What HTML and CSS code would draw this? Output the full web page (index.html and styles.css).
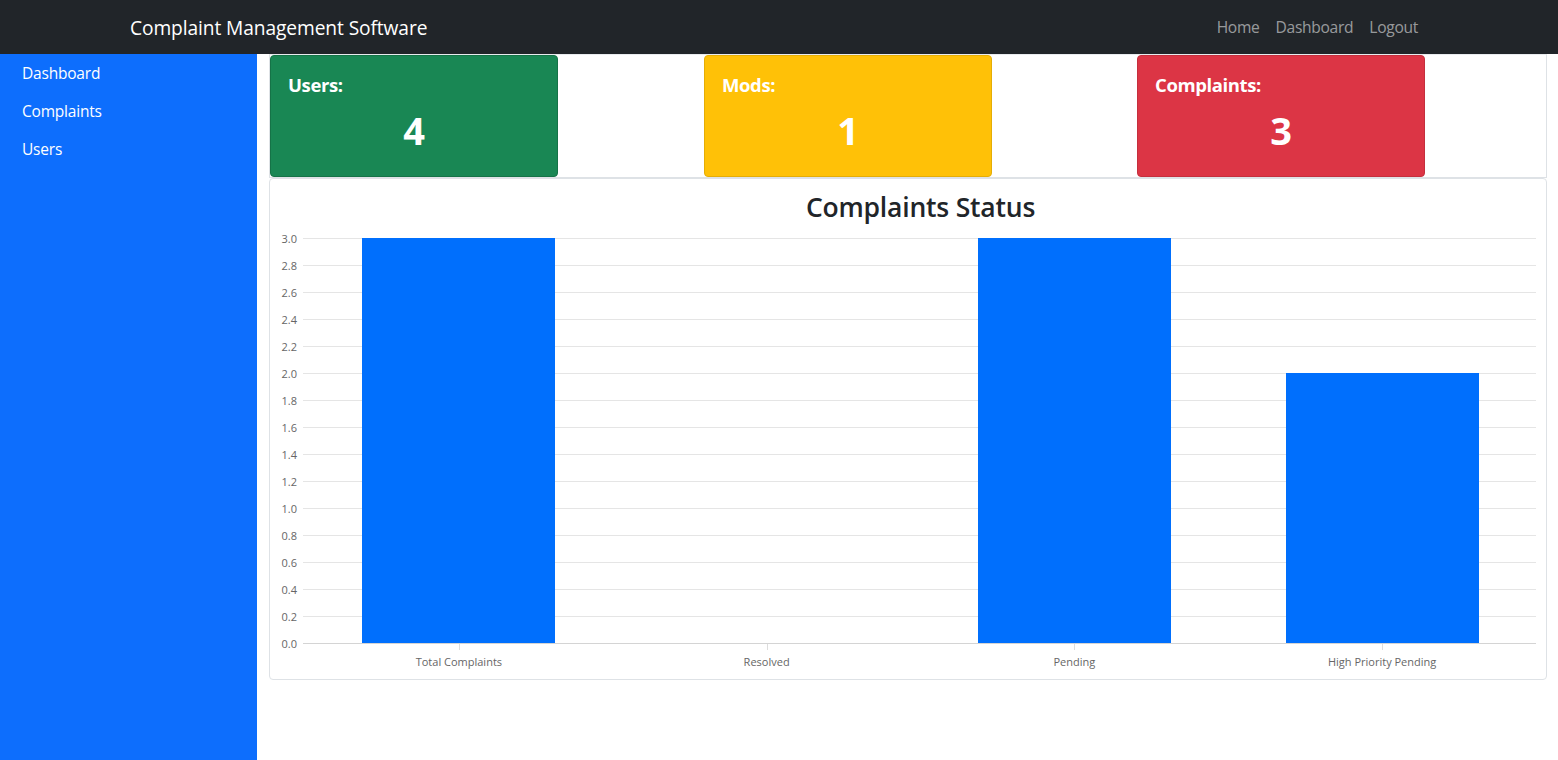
FILE: index.html
```html
<!DOCTYPE html>
<html lang="en">
<head>
<meta charset="utf-8">
<title>Complaint Management Software</title>
<link rel="stylesheet" href="styles.css">
</head>
<body>
<header class="topbar">
  <a class="brand" href="#">Complaint Management Software</a>
  <nav class="topnav">
    <a href="#">Home</a>
    <a href="#">Dashboard</a>
    <a href="#">Logout</a>
  </nav>
</header>
<div class="layout">
  <aside class="sidebar">
    <a href="#">Dashboard</a>
    <a href="#">Complaints</a>
    <a href="#">Users</a>
  </aside>
  <main class="main">
    <section class="stats">
      <div class="stat-col"><div class="stat green"><div class="stat-label">Users:</div><div class="stat-value">4</div></div></div>
      <div class="stat-col"><div class="stat yellow"><div class="stat-label">Mods:</div><div class="stat-value">1</div></div></div>
      <div class="stat-col"><div class="stat red"><div class="stat-label">Complaints:</div><div class="stat-value">3</div></div></div>
    </section>
    <section class="chart-card">
      <h2 class="chart-title">Complaints Status</h2>
      <div class="chart">
        <div class="y-axis">
          <div class="tick">3.0</div><div class="tick">2.8</div><div class="tick">2.6</div><div class="tick">2.4</div>
          <div class="tick">2.2</div><div class="tick">2.0</div><div class="tick">1.8</div><div class="tick">1.6</div>
          <div class="tick">1.4</div><div class="tick">1.2</div><div class="tick">1.0</div><div class="tick">0.8</div>
          <div class="tick">0.6</div><div class="tick">0.4</div><div class="tick">0.2</div><div class="tick">0.0</div>
        </div>
        <div class="plot-wrap">
          <div class="plot">
            <div class="bar-col"><div class="bar" style="height:100%"></div></div>
            <div class="bar-col"><div class="bar" style="height:0%"></div></div>
            <div class="bar-col"><div class="bar" style="height:100%"></div></div>
            <div class="bar-col"><div class="bar" style="height:66.667%"></div></div>
          </div>
          <div class="x-axis">
            <div class="x-label">Total Complaints</div>
            <div class="x-label">Resolved</div>
            <div class="x-label">Pending</div>
            <div class="x-label">High Priority Pending</div>
          </div>
        </div>
      </div>
    </section>
  </main>
</div>
</body>
</html>
```

FILE: styles.css
```css
* { box-sizing: border-box; }
html, body { margin: 0; height: 100%; }
body {
  font-family: "Open Sans", "Noto Sans", "Liberation Sans", sans-serif;
  color: #212529;
  background: #fff;
  overflow: hidden;
}
a { text-decoration: none; }

.topbar {
  height: 54px;
  background: #212529;
  display: flex;
  align-items: center;
  justify-content: space-between;
  padding: 0 132px 0 130px;
}
.brand {
  color: #fff;
  font-size: 19.2px;
  letter-spacing: -0.1px;
}
.topnav { display: flex; }
.topnav a {
  color: rgba(255,255,255,0.55);
  font-size: 15.6px;
  padding: 0 8px;
  letter-spacing: -0.3px;
}

.layout {
  display: flex;
  height: calc(100% - 54px);
}
.sidebar {
  width: 257px;
  flex: none;
  background: #0d6efd;
  display: flex;
  flex-direction: column;
  padding: 8px 0 0 22px;
  gap: 16px;
}
.sidebar a {
  color: #fff;
  font-size: 15.5px;
  line-height: 22px;
  letter-spacing: -0.2px;
}

.main {
  flex: 1;
  padding: 0 11px 0 12px;
}
.stats {
  height: 124px;
  border: 1px solid #dee2e6;
  border-top-color: #e9ecef;
  display: grid;
  grid-template-columns: 434px 433px 1fr;
}
.stat {
  width: 288px;
  height: 122px;
  border-radius: 4px;
  color: #fff;
  padding: 16px 17px 0;
}
.green { background: #198754; border: 1px solid #157347; }
.yellow { background: #ffc107; border: 1px solid #e5ad06; }
.red { background: #dc3545; border: 1px solid #c52f3d; }
.stat-label {
  font-size: 18.5px;
  font-weight: 700;
  line-height: 26px;
  letter-spacing: -0.4px;
}
.stat-value {
  text-align: center;
  font-size: 38px;
  font-weight: 700;
  line-height: 50px;
  margin-top: 7px;
}

.chart-card {
  height: 502px;
  border: 1px solid #dee2e6;
  border-radius: 4px;
  padding: 0 10px 0 10px;
}
.chart-title {
  margin: 8px 0 0;
  padding-left: 25px;
  text-align: center;
  font-size: 26.5px;
  font-weight: 600;
  line-height: 40px;
  letter-spacing: -0.2px;
}
.chart {
  display: flex;
  margin-top: 11px;
}
.y-axis {
  width: 17px;
  height: 405px;
  display: flex;
  flex-direction: column;
  justify-content: space-between;
  align-items: flex-end;
  margin-right: 6px;
}
.tick {
  height: 0;
  display: flex;
  align-items: center;
  font-size: 11px;
  color: #666;
}
.plot-wrap { flex: 1; }
.plot {
  height: 406px;
  display: grid;
  grid-template-columns: repeat(4, 1fr);
  align-items: end;
  padding-left: 2px;
  background:
    repeating-linear-gradient(to bottom, #e5e5e5 0, #e5e5e5 1px, transparent 1px, transparent 27px);
  border-bottom: 1px solid #d4d4d4;
}
.bar-col {
  height: 405px;
  display: flex;
  align-items: flex-end;
  justify-content: center;
}
.bar {
  width: 193px;
  background: #006ffd;
}
.x-axis {
  display: grid;
  grid-template-columns: repeat(4, 1fr);
  padding-left: 2px;
}
.x-label {
  position: relative;
  text-align: center;
  font-size: 11px;
  color: #666;
  padding-top: 11px;
  line-height: 14px;
}
.x-label::before {
  content: "";
  position: absolute;
  top: 0;
  left: 50%;
  width: 1px;
  height: 6px;
  background: #ddd;
}
```
